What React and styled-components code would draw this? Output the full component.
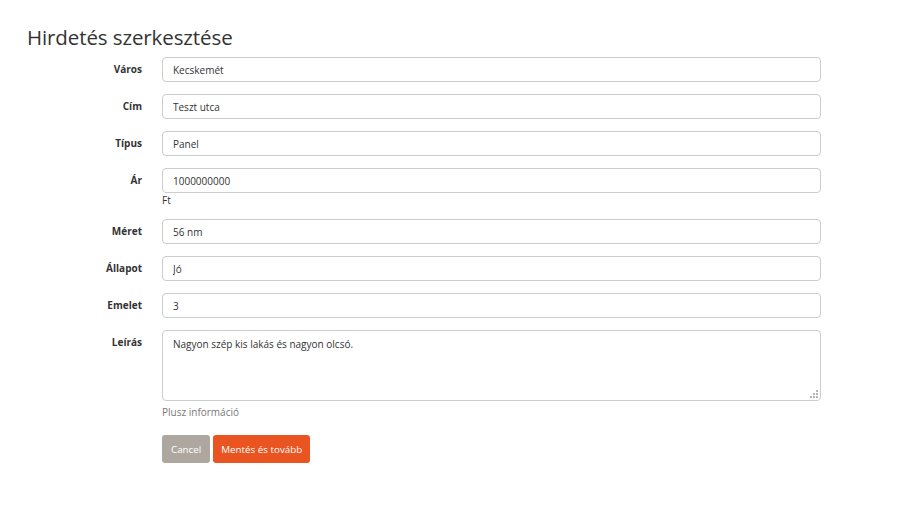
import React from "react";
import styled, { createGlobalStyle } from "styled-components";

const Global = createGlobalStyle`
  html, body { margin: 0; padding: 0; background: #fff; }
  body { font-family: "Open Sans", "Noto Sans", sans-serif; color: #333; }
  * { box-sizing: border-box; }
`;

const Page = styled.div`
  padding: 23px 0 0 27px;
`;

const Title = styled.h1`
  margin: 0 0 6px 0;
  font-size: 20.5px;
  font-weight: 400;
  line-height: 28px;
  color: #333;
  letter-spacing: -0.1px;
`;

const Form = styled.form`
  display: grid;
  grid-template-columns: 115px 659px;
  column-gap: 20px;
  row-gap: 12px;
  margin: 0;
`;

const Label = styled.label`
  text-align: right;
  font-size: 10px;
  font-weight: 700;
  line-height: 25px;
  color: #333;
`;

const Field = styled.div`
  display: flex;
  flex-direction: column;
`;

const Input = styled.input`
  height: 25px;
  width: 100%;
  border: 1px solid #ccc;
  border-radius: 4px;
  padding: 0 10px;
  font-family: inherit;
  font-size: 10px;
  color: #333;
  background: #fff;
  outline: none;
`;

const AreaWrap = styled.div`
  position: relative;
`;

const TextArea = styled.textarea`
  height: 71px;
  width: 100%;
  border: 1px solid #ccc;
  border-radius: 4px;
  padding: 6px 10px;
  font-family: inherit;
  font-size: 10px;
  line-height: 14px;
  color: #333;
  background: #fff;
  outline: none;
  resize: none;
  display: block;
`;

const Grip = styled.svg`
  position: absolute;
  right: 3px;
  bottom: 3px;
  width: 8px;
  height: 8px;
  pointer-events: none;
`;

const Help = styled.span`
  display: block;
  font-size: 10px;
  line-height: 14px;
  margin-top: ${(p) => p.$mt || "0"};
  color: ${(p) => (p.$muted ? "#777" : "#333")};
`;

const Actions = styled.div`
  grid-column: 2;
  display: flex;
  gap: 3px;
  margin-top: 4px;
`;

const Button = styled.button`
  height: 28px;
  border: none;
  border-radius: 3px;
  padding: 0 ${(p) => (p.$primary ? "8px" : "9px")};
  font-family: inherit;
  font-size: 9.8px;
  color: #fff;
  background: ${(p) => (p.$primary ? "#e95420" : "#aea79f")};
  cursor: pointer;
`;

const rows = [
  { label: "Város", value: "Kecskemét" },
  { label: "Cím", value: "Teszt utca" },
  { label: "Típus", value: "Panel" },
  { label: "Ár", value: "1000000000", help: "Ft" },
  { label: "Méret", value: "56 nm" },
  { label: "Állapot", value: "Jó" },
  { label: "Emelet", value: "3" },
];

export default function App() {
  return (
    <>
      <Global />
      <Page>
        <Title>Hirdetés szerkesztése</Title>
        <Form onSubmit={(e) => e.preventDefault()}>
          {rows.map((r) => (
            <React.Fragment key={r.label}>
              <Label>{r.label}</Label>
              <Field>
                <Input defaultValue={r.value} />
                {r.help && <Help>{r.help}</Help>}
              </Field>
            </React.Fragment>
          ))}
          <Label>Leírás</Label>
          <Field>
            <AreaWrap>
              <TextArea defaultValue="Nagyon szép kis lakás és nagyon olcsó." />
              <Grip viewBox="0 0 8 8">
                <g fill="#b5b5b5">
                  <rect x="6" y="0" width="2" height="2" />
                  <rect x="3" y="3" width="2" height="2" />
                  <rect x="6" y="3" width="2" height="2" />
                  <rect x="0" y="6" width="2" height="2" />
                  <rect x="3" y="6" width="2" height="2" />
                  <rect x="6" y="6" width="2" height="2" />
                </g>
              </Grip>
            </AreaWrap>
            <Help $muted $mt="4px">Plusz információ</Help>
          </Field>
          <Actions>
            <Button type="button">Cancel</Button>
            <Button type="button" $primary>Mentés és tovább</Button>
          </Actions>
        </Form>
      </Page>
    </>
  );
}
